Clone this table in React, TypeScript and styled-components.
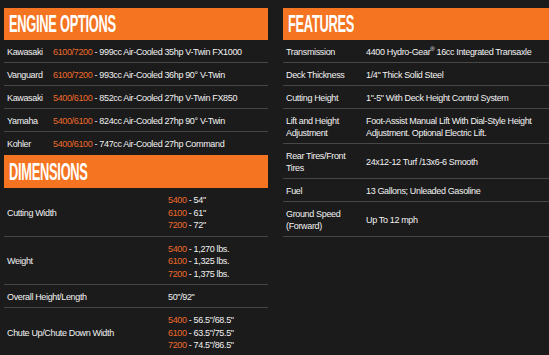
import React from "react";
import styled, { createGlobalStyle } from "styled-components";

const GlobalStyle = createGlobalStyle`
  html, body {
    margin: 0;
    padding: 0;
    background: #1b1b1b;
  }
  body {
    font-family: "Liberation Sans", Arial, sans-serif;
    font-size: 9px;
    letter-spacing: -0.35px;
    color: #f2f2f2;
  }
`;

const Page = styled.div`
  display: grid;
  grid-template-columns: 264px 1fr;
  column-gap: 15px;
  align-items: start;
  width: 549px;
  height: 355px;
  box-sizing: border-box;
  padding: 8px 0 0 4px;
  overflow: hidden;
  background: #1b1b1b;
`;

const Column = styled.div`
  display: flex;
  flex-direction: column;
`;

const Header = styled.div<{ $height: number }>`
  height: ${p => p.$height}px;
  background: #f47421;
  display: flex;
  align-items: center;
  padding-left: 5px;
  overflow: hidden;
`;

const Title = styled.h2`
  margin: 0;
  display: inline-block;
  font-family: "Liberation Sans", Arial, sans-serif;
  font-weight: 700;
  font-size: 24px;
  line-height: 24px;
  letter-spacing: -0.5px;
  color: #fff;
  white-space: nowrap;
  transform: scaleX(0.535);
  transform-origin: left center;
`;

const Row = styled.div<{ $labelWidth: number; $noBorder?: boolean }>`
  display: grid;
  grid-template-columns: ${p => p.$labelWidth}px 1fr;
  align-items: center;
  padding: 6px 3px 4px;
  line-height: 12px;
  border-bottom: 1px solid ${p => (p.$noBorder ? "transparent" : "#474747")};
`;

const Label = styled.div`
  color: #f2f2f2;
`;

const Value = styled.div`
  color: #f2f2f2;
  white-space: nowrap;
`;

const Model = styled.span`
  color: #ec6a2a;
`;

const Lines = styled.div`
  display: flex;
  flex-direction: column;
  line-height: 12.5px;
`;

const Sup = styled.sup`
  font-size: 6px;
  line-height: 0;
`;

const engines = [
  ["Kawasaki", "6100/7200", "999cc Air-Cooled 35hp V-Twin FX1000"],
  ["Vanguard", "6100/7200", "993cc Air-Cooled 36hp 90° V-Twin"],
  ["Kawasaki", "5400/6100", "852cc Air-Cooled 27hp V-Twin FX850"],
  ["Yamaha", "5400/6100", "824cc Air-Cooled 27hp 90° V-Twin"],
  ["Kohler", "5400/6100", "747cc Air-Cooled 27hp Command"]
];

const dimensions: Array<[string, Array<[string, string]> | string]> = [
  ["Cutting Width", [["5400", "54\""], ["6100", "61\""], ["7200", "72\""]]],
  ["Weight", [["5400", "1,270 lbs."], ["6100", "1,325 lbs."], ["7200", "1,375 lbs."]]],
  ["Overall Height/Length", "50\"/92\""],
  [
    "Chute Up/Chute Down Width",
    [["5400", "56.5\"/68.5\""], ["6100", "63.5\"/75.5\""], ["7200", "74.5\"/86.5\""]]
  ]
];

const features: Array<[React.ReactNode, React.ReactNode]> = [
  ["Transmission", <>4400 Hydro-Gear<Sup>®</Sup> 16cc Integrated Transaxle</>],
  ["Deck Thickness", "1/4\" Thick Solid Steel"],
  ["Cutting Height", "1\"-5\" With Deck Height Control System"],
  [
    <>Lift and Height<br />Adjustment</>,
    <>Foot-Assist Manual Lift With Dial-Style Height<br />Adjustment. Optional Electric Lift.</>
  ],
  [<>Rear Tires/Front<br />Tires</>, "24x12-12 Turf /13x6-6 Smooth"],
  ["Fuel", "13 Gallons; Unleaded Gasoline"],
  [<>Ground Speed<br />(Forward)</>, "Up To 12 mph"]
];

export default function App() {
  return (
    <>
      <GlobalStyle />
      <Page>
        <Column>
          <Header $height={32}>
            <Title>ENGINE OPTIONS</Title>
          </Header>
          {engines.map(([brand, model, desc], i) => (
            <Row key={i} $labelWidth={46} $noBorder={i === engines.length - 1}>
              <Label>{brand}</Label>
              <Value>
                <Model>{model}</Model> - {desc}
              </Value>
            </Row>
          ))}
          <Header $height={33}>
            <Title>DIMENSIONS</Title>
          </Header>
          {dimensions.map(([name, val], i) => (
            <Row key={i} $labelWidth={161}>
              <Label>{name}</Label>
              {typeof val === "string" ? (
                <Value>{val}</Value>
              ) : (
                <Lines>
                  {val.map(([m, v]) => (
                    <Value key={m}>
                      <Model>{m}</Model> - {v}
                    </Value>
                  ))}
                </Lines>
              )}
            </Row>
          ))}
        </Column>
        <Column>
          <Header $height={32}>
            <Title>FEATURES</Title>
          </Header>
          {features.map(([name, val], i) => (
            <Row key={i} $labelWidth={80}>
              <Label>{name}</Label>
              <Value>{val}</Value>
            </Row>
          ))}
        </Column>
      </Page>
    </>
  );
}
